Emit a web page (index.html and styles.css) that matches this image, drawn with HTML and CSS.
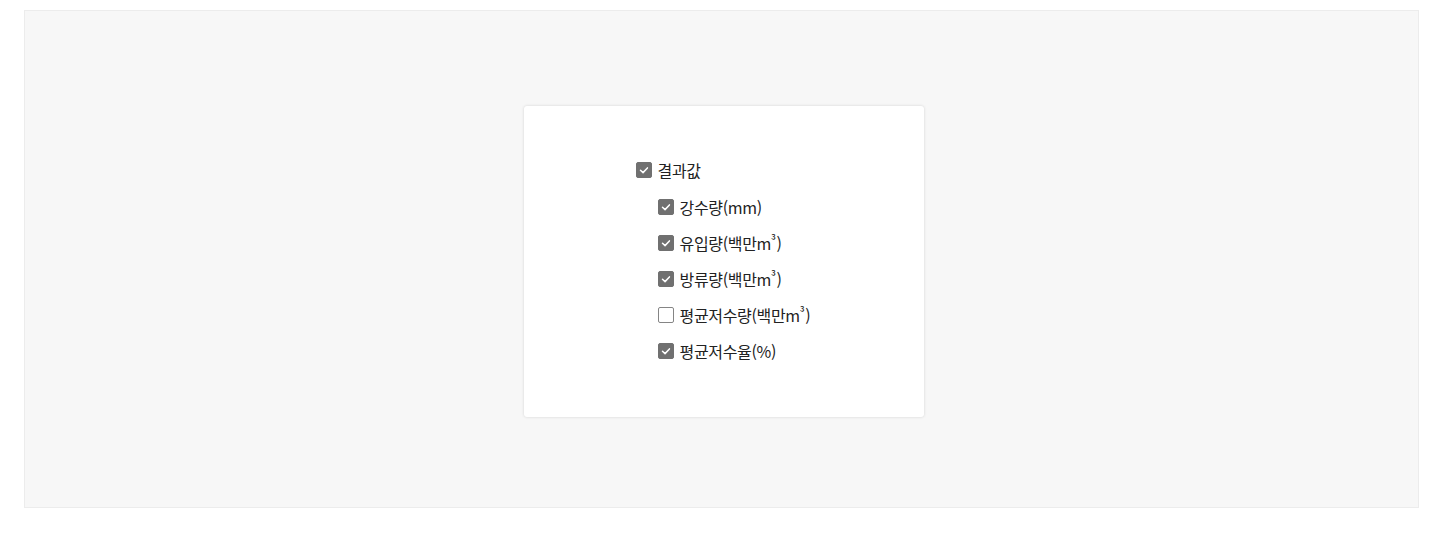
FILE: index.html
```html
<!DOCTYPE html>
<html lang="ko">
<head>
  <meta charset="UTF-8" />
  <title>결과값</title>
  <link rel="stylesheet" href="styles.css">
</head>
<body>
  <div class="panel">
    <div class="card">
      <ul class="tree">
        <li class="item">
          <span class="box checked"><svg viewBox="0 0 16 16"><path d="M4 8.3l2.9 2.7 5-5.4"/></svg></span>
          결과값
        </li>
        <li class="item child">
          <span class="box checked"><svg viewBox="0 0 16 16"><path d="M4 8.3l2.9 2.7 5-5.4"/></svg></span>
          강수량(mm)
        </li>
        <li class="item child">
          <span class="box checked"><svg viewBox="0 0 16 16"><path d="M4 8.3l2.9 2.7 5-5.4"/></svg></span>
          유입량(백만m<span class="sup">³</span>)
        </li>
        <li class="item child">
          <span class="box checked"><svg viewBox="0 0 16 16"><path d="M4 8.3l2.9 2.7 5-5.4"/></svg></span>
          방류량(백만m<span class="sup">³</span>)
        </li>
        <li class="item child">
          <span class="box"></span>
          평균저수량(백만m<span class="sup">³</span>)
        </li>
        <li class="item child">
          <span class="box checked"><svg viewBox="0 0 16 16"><path d="M4 8.3l2.9 2.7 5-5.4"/></svg></span>
          평균저수율(%)
        </li>
      </ul>
    </div>
  </div>
</body>
</html>
```

FILE: styles.css
```css
body {
  margin: 0;
  padding: 10px 24px 0;
  font-family: "Noto Sans CJK KR", "Noto Sans", sans-serif;
  color: #222;
  background: #fff;
}

.panel {
  height: 496px;
  border: 1px solid #ececec;
  background-color: #f7f7f7;
  display: flex;
  align-items: center;
  justify-content: center;
}

.card {
  width: 400px;
  height: 311px;
  margin-left: 4px;
  margin-top: 5px;
  background: #fff;
  border-radius: 3px;
  box-shadow: 0 0 3px rgba(0, 0, 0, 0.15);
  display: flex;
  align-items: center;
  justify-content: center;
}

.tree {
  list-style: none;
  margin: -3px 0 0 -1px;
  padding: 0;
}

.item {
  display: flex;
  align-items: center;
  height: 20px;
  font-size: 16px;
  letter-spacing: -0.35px;
  margin-bottom: 16px;
}

.item:first-child {
  margin-bottom: 17px;
}

.item:last-child {
  margin-bottom: 0;
}

.child {
  padding-left: 22px;
}

.sup {
  font-size: 12px;
  align-self: flex-start;
  margin-top: -2px;
  margin-right: 1px;
}

.box {
  width: 16px;
  height: 16px;
  box-sizing: border-box;
  border: 1.5px solid #858585;
  border-radius: 2px;
  background: #fff;
  margin-right: 6px;
  display: flex;
  align-items: center;
  justify-content: center;
  flex-shrink: 0;
}

.box.checked {
  background: #707070;
  border-color: #707070;
}

.box svg {
  width: 16px;
  height: 16px;
  fill: none;
  stroke: #fff;
  stroke-width: 1.7;
  stroke-linecap: round;
  stroke-linejoin: round;
}
```
